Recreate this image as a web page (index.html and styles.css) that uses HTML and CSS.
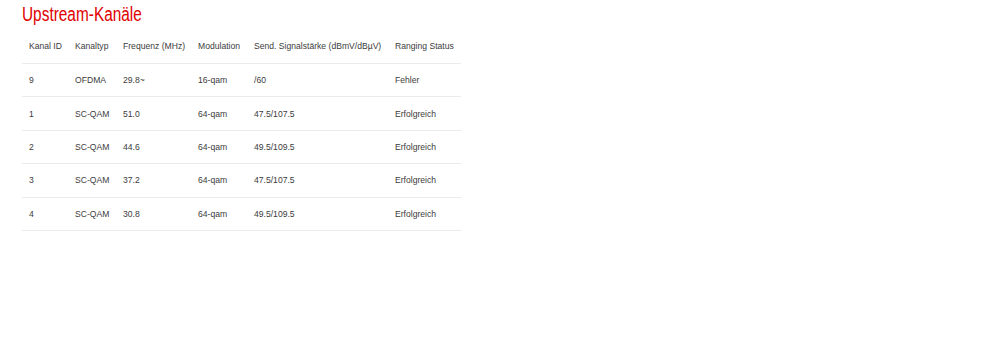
FILE: index.html
```html
<!DOCTYPE html>
<html lang="de">
<head>
<meta charset="utf-8">
<title>Upstream-Kanäle</title>
<link rel="stylesheet" href="styles.css">
</head>
<body>
<div class="page">
  <h2 class="title">Upstream-Kanäle</h2>
  <table class="channels">
    <thead>
      <tr>
        <th class="c1">Kanal ID</th>
        <th class="c2">Kanaltyp</th>
        <th class="c3">Frequenz (MHz)</th>
        <th class="c4">Modulation</th>
        <th class="c5">Send. Signalstärke (dBmV/dBµV)</th>
        <th class="c6">Ranging Status</th>
      </tr>
    </thead>
    <tbody>
      <tr><td>9</td><td>OFDMA</td><td>29.8~</td><td>16-qam</td><td>/60</td><td>Fehler</td></tr>
      <tr><td>1</td><td>SC-QAM</td><td>51.0</td><td>64-qam</td><td>47.5/107.5</td><td>Erfolgreich</td></tr>
      <tr><td>2</td><td>SC-QAM</td><td>44.6</td><td>64-qam</td><td>49.5/109.5</td><td>Erfolgreich</td></tr>
      <tr><td>3</td><td>SC-QAM</td><td>37.2</td><td>64-qam</td><td>47.5/107.5</td><td>Erfolgreich</td></tr>
      <tr><td>4</td><td>SC-QAM</td><td>30.8</td><td>64-qam</td><td>49.5/109.5</td><td>Erfolgreich</td></tr>
    </tbody>
  </table>
</div>
</body>
</html>
```
FILE: styles.css
```css
html, body {
  margin: 0;
  padding: 0;
  background: #ffffff;
}
.page {
  padding: 0 22px;
  font-family: "Liberation Sans", Arial, sans-serif;
  color: #3c3c3c;
}
.title {
  margin: 0;
  padding-top: 2px;
  height: 27px;
  font-family: "Liberation Sans", Arial, sans-serif;
  font-weight: normal;
  font-size: 20px;
  line-height: 24px;
  color: #e00000;
  transform: scaleX(0.77);
  transform-origin: left top;
  white-space: nowrap;
}
.channels {
  border-collapse: collapse;
  font-size: 8.6px;
}
.channels th,
.channels td {
  text-align: left;
  font-weight: normal;
  padding: 0 0 0 7px;
  height: 32.4px;
  white-space: nowrap;
  vertical-align: middle;
}
.channels tr {
  border-bottom: 1px solid #ebebeb;
}
.channels th {
  height: 34px;
}
.c1 { width: 39px; }
.c2 { width: 41px; }
.c3 { width: 68px; }
.c4 { width: 49px; }
.c5 { width: 134px; }
.c6 { width: 66px; }
```
